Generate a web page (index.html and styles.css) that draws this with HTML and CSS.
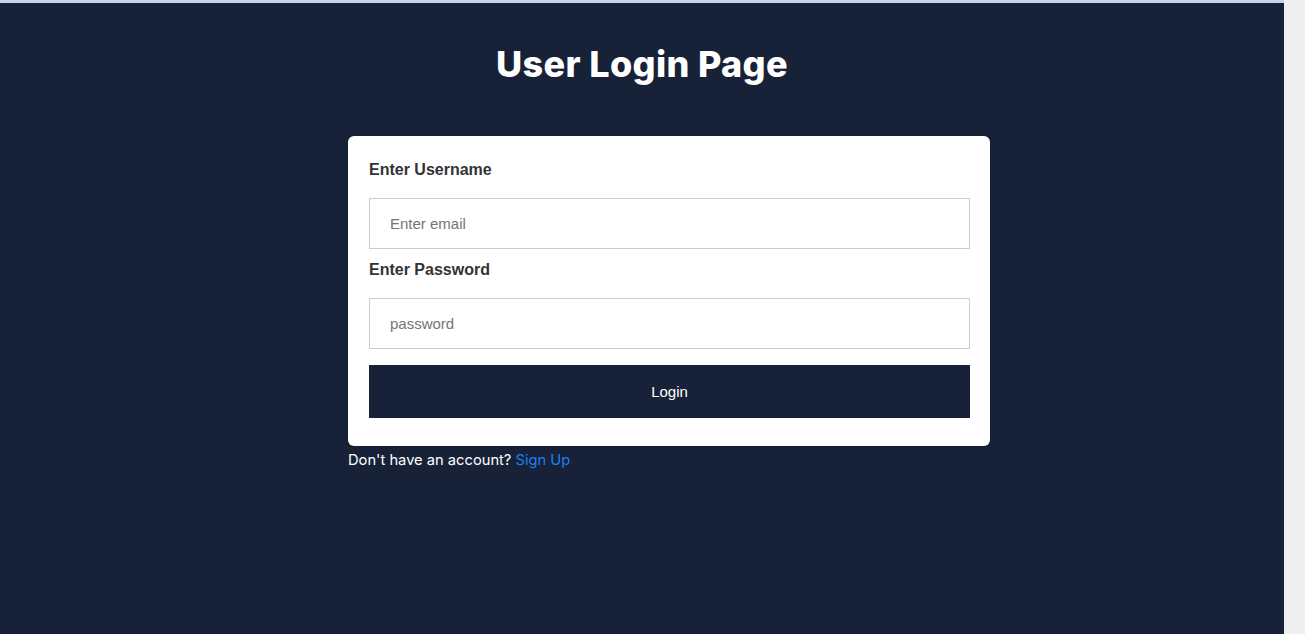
FILE: index.html
```html
<!DOCTYPE html>
<html>
<head>
<meta charset="utf-8">
<link rel="stylesheet" href="styles.css">
</head>
<body>
<div class="frame">
  <main class="page">
    <h1 class="title">User Login Page</h1>
    <div class="wrap">
      <form class="card">
        <label class="label">Enter Username</label>
        <input class="field" type="text" placeholder="Enter email">
        <label class="label label-2">Enter Password</label>
        <input class="field" type="password" placeholder="password">
        <button class="btn" type="button">Login</button>
      </form>
      <p class="foot">Don't have an account? <a class="link" href="#">Sign Up</a></p>
    </div>
  </main>
  <div class="side"></div>
</div>
</body>
</html>
```
FILE: styles.css
```css
* { box-sizing: border-box; }
html, body { margin: 0; padding: 0; height: 100%; }
body { background: #efefef; overflow: hidden; }
.frame { display: flex; height: 634px; }
.page {
  width: 1284px;
  background: #172239;
  border-top: 3px solid #c5d1ee;
  display: flex;
  flex-direction: column;
}
.side { flex: 1; background: #efefef; }
.title {
  margin: 37px 0 0;
  text-align: center;
  color: #ffffff;
  font-family: Inter, "Noto Sans", sans-serif;
  font-weight: 800;
  font-size: 36px;
  line-height: 48px;
  letter-spacing: 0.35px;
}
.wrap { margin: 48px 0 0 348px; width: 642px; }
.card {
  background: #ffffff;
  border-radius: 6px;
  padding: 20px 20px 28px 21px;
  display: flex;
  flex-direction: column;
  box-shadow: 0 1px 3px rgba(0, 0, 0, 0.2);
}
.label {
  font-family: "Liberation Sans", Arial, sans-serif;
  font-weight: 700;
  font-size: 16px;
  line-height: 24px;
  color: #333333;
  margin: 2px 0 16px;
}
.label-2 { margin-top: 9px; }
.field {
  height: 51px;
  border: 1px solid #cccccc;
  padding: 0 20px;
  font-family: "Liberation Sans", Arial, sans-serif;
  font-size: 15px;
  color: #333;
  outline: none;
}
.field::placeholder { color: #757575; }
.btn {
  margin-top: 16px;
  height: 53px;
  border: 0;
  background: #172239;
  color: #ffffff;
  font-family: "Liberation Sans", Arial, sans-serif;
  font-size: 15px;
}
.foot {
  margin: 4px 0 0;
  font-family: Inter, "Noto Sans", sans-serif;
  font-size: 14.7px;
  line-height: 20px;
  color: #ffffff;
}
.link { color: #1f7ef0; text-decoration: none; }
```
